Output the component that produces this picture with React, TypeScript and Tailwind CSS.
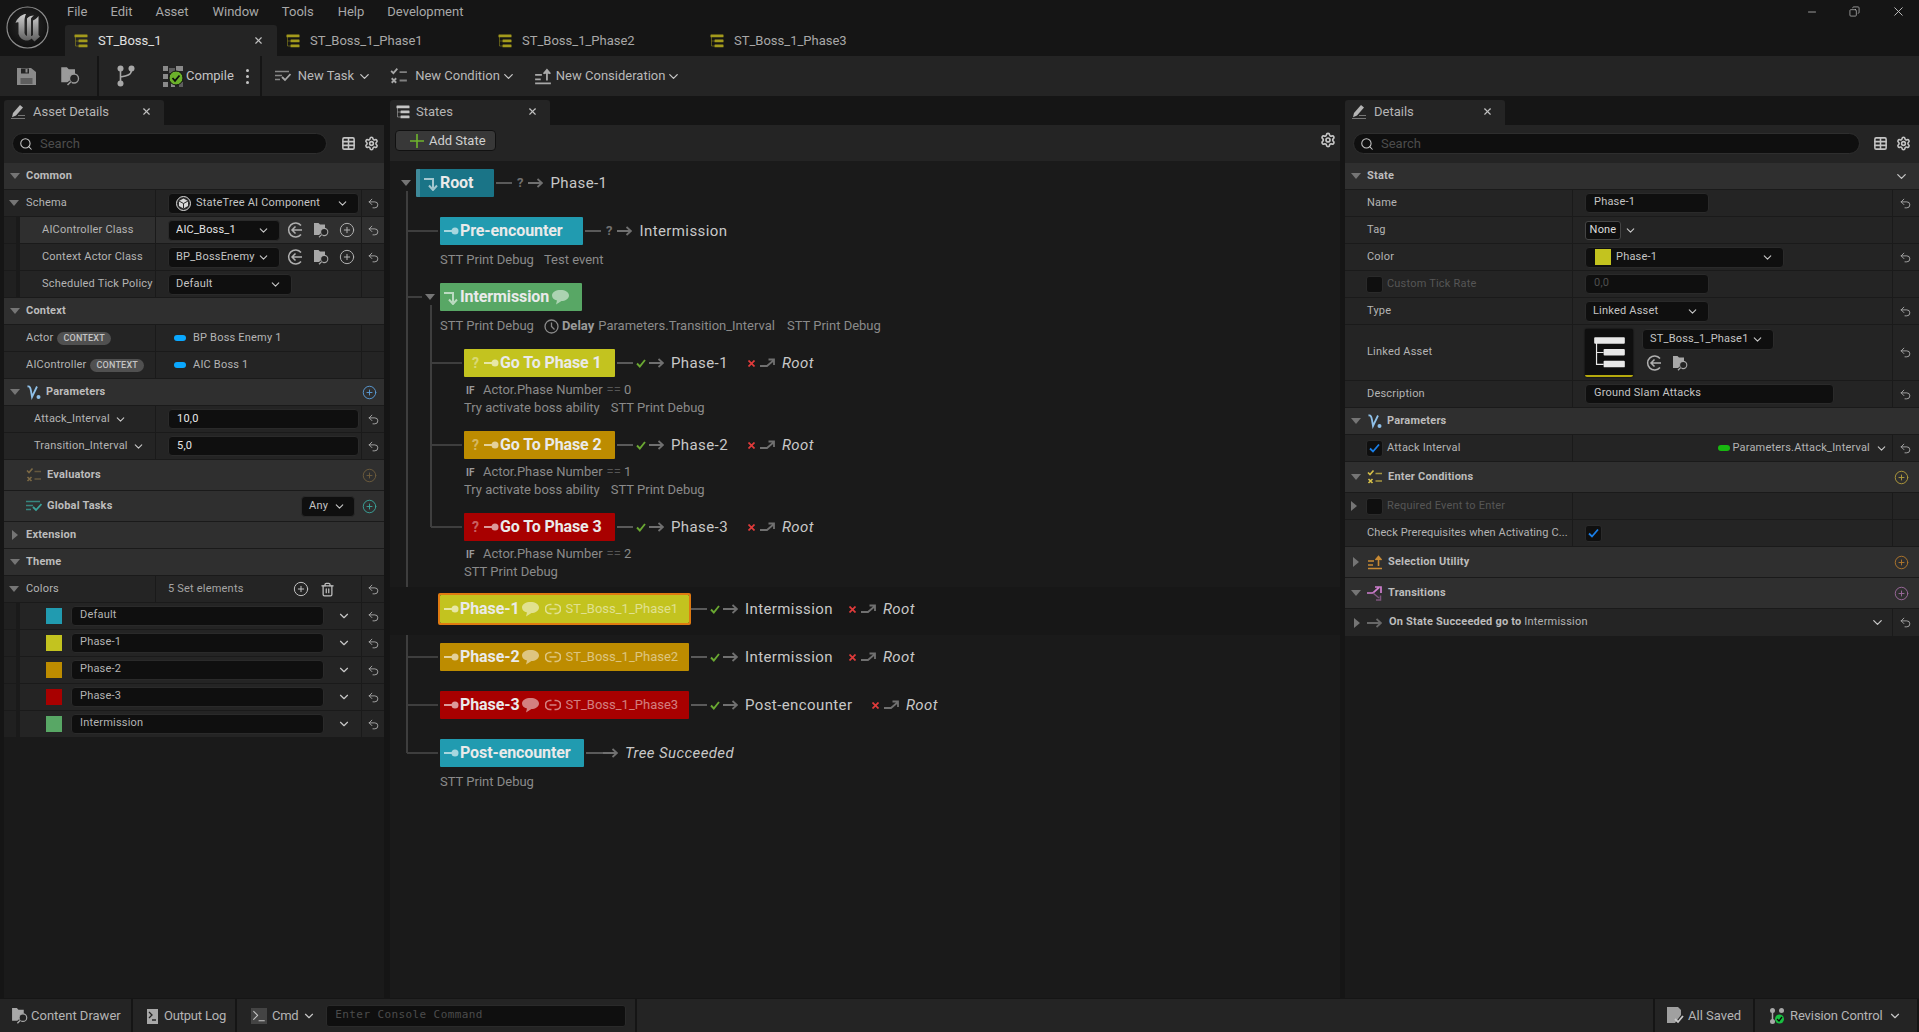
import type { ReactNode } from "react"
import { ChevronDown, CirclePlus, Search, Settings, Table, Trash2, Undo2, X, Minus, Copy, Terminal } from "lucide-react"

const Tri = ({ open = true }: { open?: boolean }) =>
  open ? (
    <svg width="10" height="6" viewBox="0 0 10 6" className="shrink-0">
      <path d="M0 0h10L5 6z" fill="#757575" />
    </svg>
  ) : (
    <svg width="6" height="10" viewBox="0 0 6 10" className="shrink-0">
      <path d="M0 0l6 5-6 5z" fill="#757575" />
    </svg>
  )

const Reset = () => <Undo2 size={13} strokeWidth={1.6} className="text-[#b0b0b0]" />
const Chev = ({ c = "text-[#c8c8c8]", s = 14 }: { c?: string; s?: number }) => (
  <ChevronDown size={s} strokeWidth={2} className={`${c} shrink-0`} />
)

const TreeIcon = ({ c = "#a39a1c", s = 14 }: { c?: string; s?: number }) => (
  <svg width={s} height={s} viewBox="0 0 14 14" className="shrink-0">
    <rect x="0.5" y="0.5" width="13" height="2.8" rx="0.4" fill={c} />
    <rect x="4.5" y="5.5" width="9" height="2.8" rx="0.4" fill={c} />
    <rect x="4.5" y="10.5" width="9" height="2.8" rx="0.4" fill={c} />
    <path d="M1.5 3v9h3M1.500 7h3" stroke={c} strokeWidth="0.5" fill="none" />
  </svg>
)

const PenIcon = () => (
  <svg width="17" height="17" viewBox="0 0 17 17" className="shrink-0">
    <path d="M3 10l7-8 3 2.600-7 8-4 1.600z" fill="#b5b5b5" />
    <path d="M1 15.500h14M8 12.500h7" stroke="#777" strokeWidth="1.200" />
  </svg>
)

const FolderSearch = ({ c = "#a8a8a8", s = 16 }: { c?: string; s?: number }) => (
  <svg width={s} height={s} viewBox="0 0 16 16" className="shrink-0">
    <path d="M1 1h4.500L7 2.500h5V13H1z" fill={c} />
    <circle cx="11.200" cy="10" r="3.600" fill="#242424" stroke={c} strokeWidth="1.100" />
    <path d="M8.600 12.600L6 15.200" stroke="#242424" strokeWidth="3" />
    <path d="M8.600 12.600L6 15.200" stroke={c} strokeWidth="1.300" />
  </svg>
)

const BrowseTo = () => (
  <svg width="16" height="16" viewBox="0 0 16 16" className="shrink-0">
    <path d="M14 3.500A7 7 0 1 0 14 12.500" fill="none" stroke="#b0b0b0" strokeWidth="1.500" />
    <path d="M15 8H5M8.500 4.500L5 8l3.500 3.500" fill="none" stroke="#b0b0b0" strokeWidth="1.500" />
  </svg>
)

const PanelTab = ({ icon, title }: { icon: ReactNode; title: string }) => (
  <div className="h-[29px] pt-[4px] bg-[#151515] shrink-0">
    <div className="w-[160px] h-[25px] pb-[2px] bg-[#242424] rounded-t-[3px] flex items-center pl-[6px] pr-[12px] text-[#b5b5b5] text-[13px]">
      {icon}
      <span className="ml-[6px] flex-1 whitespace-nowrap">{title}</span>
      <X size={11} strokeWidth={2.500} className="text-[#c0c0c0]" />
    </div>
  </div>
)

const SearchRow = ({ w, gap }: { w: string; gap: string }) => (
  <div className="h-[38px] pb-[1px] bg-[#242424] flex items-center pl-[8px] shrink-0">
    <div className={`${w} h-[21px] rounded-full bg-[#0f0f0f] border border-[#2e2e2e] flex items-center pl-[6px] text-[13px] text-[#4c4c4c]`}>
      <Search size={14} strokeWidth={1.800} className="text-[#c8c8c8] mr-[7px]" />
      Search
    </div>
    <span className={gap}><Table size={15} strokeWidth={2.500} className="text-[#c4c4c4]" /></span>
    <Settings size={15} strokeWidth={2.500} className="text-[#c4c4c4] ml-[8px]" />
  </div>
)

const Section = ({ children, tall, closed, add, right, pr = "pr-[7px]" }: { children: ReactNode; tall?: boolean; closed?: boolean; add?: string; right?: ReactNode; pr?: string }) => (
  <div className={`${tall ? "h-[31px]" : "h-[27px]"} bg-[#2f2f2f] border-b border-[#1a1a1a] flex items-center pl-[5px] ${pr} text-[11px] font-bold text-[#bcbcbc] tracking-[0.2px]`}>
    <span className="w-[12px] flex justify-center shrink-0">{closed === undefined ? null : <Tri open={!closed} />}</span>
    <span className="ml-[5px] flex items-center flex-1 gap-[5px]">{children}</span>
    {right}
    {add && <CirclePlus size={15} strokeWidth={1.500} style={{ color: add }} />}
  </div>
)

const Dropdown = ({ w, text, white, icon }: { w: string; text: string; white?: boolean; icon?: ReactNode }) => (
  <div className={`${w} h-[21px] bg-[#0f0f0f] border border-[#2a2a2a] rounded-[4px] flex items-center pl-[7px] pr-[9px] ${white ? "text-[#e4e4e4]" : "text-[#c4c4c4]"}`}>
    {icon}
    <span className="flex-1 whitespace-nowrap overflow-hidden">{text}</span>
    <Chev s={13} />
  </div>
)

const Input = ({ w, text, dim, bright }: { w: string; text: string; dim?: boolean; bright?: boolean }) => (
  <div className={`${w} h-[20px] bg-[#0f0f0f] border border-[#2a2a2a] rounded-[4px] flex items-center pl-[8px] ${dim ? "text-[#4e4e4e] pb-[1px]" : bright ? "text-[#e8e8e8]" : "text-[#c4c4c4] pb-[1px]"}`}>
    {text}
  </div>
)

const Check = ({ on }: { on?: boolean }) => (
  <span className="w-[17px] h-[17px] bg-[#0f0f0f] border border-[#2a2a2a] rounded-[3px] flex items-center justify-center shrink-0">
    {on && (
      <svg width="11" height="10" viewBox="0 0 11 10">
        <path d="M1 5.500l3 3L10 1.500" fill="none" stroke="#1a7fe8" strokeWidth="1.800" />
      </svg>
    )}
  </span>
)

// left panel row, columns 152 / 206 / 22
const LRow = ({ label, value, reset, nested, hover }: { label: ReactNode; value?: ReactNode; reset?: boolean; nested?: boolean; hover?: boolean }) => (
  <div className="h-[27px] grid grid-cols-[152px_206px_22px] border-b border-[#1a1a1a] bg-[#242424] text-[11px] tracking-[0.2px] text-[#b4b4b4]">
    <div className={`flex items-center border-r border-[#1a1a1a] overflow-hidden ${hover ? "bg-[#2f2f2f]" : ""}`}>
      {nested && <span className="w-[12px] h-full bg-[#202020] border-r-[4px] border-[#1a1a1a] box-content shrink-0" />}
      {label}
    </div>
    <div className={`flex items-center pl-[12px] border-r border-[#1a1a1a] ${hover ? "bg-[#2f2f2f]" : ""}`}>{value}</div>
    <div className={`flex items-center justify-center ${hover ? "bg-[#2f2f2f]" : ""}`}>{reset && <Reset />}</div>
  </div>
)

const ContextTag = () => (
  <span className="ml-[4px] h-[13px] px-[6px] rounded-full bg-[#505050] text-[#c4c4c4] text-[9px] leading-[13px] font-medium">CONTEXT</span>
)

const Pin = ({ c = "bg-[#0aa8ff]" }: { c?: string }) => <span className={`${c} w-[12px] h-[6px] rounded-full shrink-0`} />

const ClassTools = () => (
  <span className="flex items-center gap-[10px] ml-[7px]">
    <BrowseTo />
    <FolderSearch />
    <CirclePlus size={16} strokeWidth={1.500} className="text-[#b0b0b0]" />
  </span>
)

const ParamIcon = ({ c = "#8fc0e8" }: { c?: string }) => (
  <svg width="15" height="15" viewBox="0 0 15 15" className="shrink-0">
    <path d="M1.500 1.500C4 1 4.500 3 5 6l1 6 5-10.500" fill="none" stroke={c} strokeWidth="1.800" />
    <circle cx="12.500" cy="12" r="2" fill={c} />
  </svg>
)

const TaskIcon = ({ c }: { c: string }) => (
  <svg width="16" height="12" viewBox="0 0 16 12" className="shrink-0">
    <path d="M0 1.500h14M0 5.500h7M0 9.500h5" stroke={c} strokeWidth="1.400" opacity="0.75" />
    <path d="M7 7l3 3 5.500-6" stroke={c} strokeWidth="1.800" fill="none" />
  </svg>
)

const CondIcon = ({ c, s = 16 }: { c: string; s?: number }) => (
  <svg width={s} height={s} viewBox="0 0 16 16" className="shrink-0">
    <path d="M1 3.500l2 2 3.500-4" stroke={c} strokeWidth="1.600" fill="none" />
    <path d="M1.500 10l4 4M5.500 10l-4 4" stroke={c} strokeWidth="1.600" />
    <path d="M8.500 4.500H15M8.500 12H15" stroke={c} strokeWidth="1.600" opacity="0.7" />
  </svg>
)

const UtilIcon = ({ c, s = 16 }: { c: string; s?: number }) => (
  <svg width={s} height={s} viewBox="0 0 16 16" className="shrink-0">
    <path d="M1 7h6M1 11h5M1 14.500h14" stroke={c} strokeWidth="1.500" />
    <path d="M11.500 12V3M8.500 6l3-3.500 3 3.500" stroke={c} strokeWidth="1.600" fill={c} />
  </svg>
)

const SchemaIcon = () => (
  <svg width="15" height="15" viewBox="0 0 15 15" className="shrink-0 mr-[5px]">
    <circle cx="7.500" cy="7.500" r="7" fill="#2a2a2a" stroke="#d8d8d8" strokeWidth="1" />
    <path d="M7.500 2.500L12 5v5l-4.500 2.500L3 10V5z" fill="#d8d8d8" />
    <path d="M3 5l4.500 2.500L12 5M7.500 7.500v5" fill="none" stroke="#2a2a2a" strokeWidth="1" />
  </svg>
)

const AssetDetails = () => {
  const colors = [
    ["Default", "bg-[#219bb0]"],
    ["Phase-1", "bg-[#c3c31f]"],
    ["Phase-2", "bg-[#bd8c00]"],
    ["Phase-3", "bg-[#a80000]"],
    ["Intermission", "bg-[#58a765]"],
  ]
  return (
    <div className="w-[380px] shrink-0 flex flex-col bg-[#1a1a1a]">
      <PanelTab icon={<PenIcon />} title="Asset Details" />
      <SearchRow w="w-[315px]" gap="ml-[14px]" />
      <Section closed={false}>Common</Section>
      <LRow
        label={<span className="flex items-center pl-[5px] gap-[7px]"><span className="w-[10px]"><Tri /></span>Schema</span>}
        value={<Dropdown w="w-[191px]" text="StateTree AI Component" icon={<SchemaIcon />} />}
        reset
      />
      <LRow nested hover label={<span className="pl-[22px]">AIController Class</span>} value={<><Dropdown w="w-[112px]" text="AIC_Boss_1" white /><ClassTools /></>} reset />
      <LRow nested label={<span className="pl-[22px]">Context Actor Class</span>} value={<><Dropdown w="w-[112px]" text="BP_BossEnemy" /><ClassTools /></>} reset />
      <LRow nested label={<span className="pl-[22px] whitespace-nowrap">Scheduled Tick Policy</span>} value={<Dropdown w="w-[124px]" text="Default" />} />
      <Section closed={false}>Context</Section>
      <LRow label={<span className="pl-[22px] flex items-center">Actor<ContextTag /></span>} value={<span className="flex items-center gap-[7px] pl-[6px]"><Pin />BP Boss Enemy 1</span>} />
      <LRow label={<span className="pl-[22px] flex items-center">AIController<ContextTag /></span>} value={<span className="flex items-center gap-[7px] pl-[6px]"><Pin />AIC Boss 1</span>} />
      <Section closed={false} add="#5a9bd5"><ParamIcon />Parameters</Section>
      <LRow label={<span className="pl-[30px] flex items-center gap-[4px]">Attack_Interval<Chev s={13} /></span>} value={<Input w="w-[191px]" text="10,0" bright />} reset />
      <LRow label={<span className="pl-[30px] flex items-center gap-[4px]">Transition_Interval<Chev s={13} /></span>} value={<Input w="w-[191px]" text="5,0" bright />} reset />
      <Section tall closed={undefined} add="#6e5c3c"><CondIcon c="#7d6a45" /><span className="text-[#bcbcbc]">Evaluators</span></Section>
      <Section
        tall
        add="#3aa39a"
        right={
          <span className="w-[54px] h-[21px] mr-[7px] rounded-[4px] bg-[#0f0f0f] border border-[#2a2a2a] flex items-center pl-[7px] gap-[5px] font-normal text-[#c4c4c4]">
            Any
            <Chev s={13} />
          </span>
        }
      >
        <TaskIcon c="#3aa39a" />Global Tasks
      </Section>
      <Section closed>Extension</Section>
      <Section closed={false}>Theme</Section>
      <LRow
        label={<span className="flex items-center pl-[5px] gap-[7px]"><span className="w-[10px]"><Tri /></span>Colors</span>}
        value={
          <span className="flex items-center w-full">
            <span className="flex-1 text-[#a4a4a4]">5 Set elements</span>
            <CirclePlus size={16} strokeWidth={1.500} className="text-[#c0c0c0]" />
            <Trash2 size={15} strokeWidth={2} className="text-[#c0c0c0] ml-[11px] mr-[26px]" />
          </span>
        }
        reset
      />
      {colors.map(([name, bg]) => (
        <div key={name} className="h-[27px] flex bg-[#242424] border-b border-[#1a1a1a] text-[11px] tracking-[0.2px] text-[#b4b4b4]">
          <span className="w-[12px] bg-[#202020] border-r-[4px] border-[#1a1a1a] box-content shrink-0" />
          <div className="flex-1 flex items-center border-r border-[#1a1a1a]">
            <span className={`${bg} w-[16px] h-[16px] ml-[26px] shrink-0`} />
            <span className="ml-[9px] w-[253px] h-[20px] bg-[#0f0f0f] border border-[#2a2a2a] rounded-[4px] pl-[8px] pt-[1px] leading-[14px]">{name}</span>
            <span className="ml-[13px]"><Chev s={14} /></span>
          </div>
          <div className="w-[22px] flex items-center justify-center"><Reset /></div>
        </div>
      ))}
    </div>
  )
}

const Line = ({ w }: { w: string }) => <span className={`${w} h-[2px] bg-[#5a5a5a] shrink-0`} />

const ArrowRight = () => (
  <svg width="15" height="10" viewBox="0 0 15 10" className="shrink-0">
    <path d="M0 5h14M9.500 1l4.500 4-4.500 4" fill="none" stroke="#707070" strokeWidth="1.800" />
  </svg>
)

const ArrowUp = () => (
  <svg width="15" height="10" viewBox="0 0 15 10" className="shrink-0">
    <path d="M0 8h7l7-6M8.500 1.500H14V7" fill="none" stroke="#707070" strokeWidth="1.800" />
  </svg>
)

const OkMark = () => (
  <svg width="10" height="9" viewBox="0 0 10 9" className="shrink-0">
    <path d="M1 4.500l2.800 3L9 1" fill="none" stroke="#6aa832" strokeWidth="1.900" />
  </svg>
)

const NoMark = () => (
  <svg width="7" height="7" viewBox="0 0 7 7" className="shrink-0">
    <path d="M0.500 0.500l6 6M6.500 0.500l-6 6" stroke="#e03b3b" strokeWidth="1.700" />
  </svg>
)

const Stub = () => (
  <svg width="15" height="8" viewBox="0 0 15 8" className="opacity-60 shrink-0">
    <path d="M0 4h9" stroke="#fff" strokeWidth="2" />
    <circle cx="11" cy="4" r="3.500" fill="#fff" />
  </svg>
)

const Turn = () => (
  <svg width="15" height="15" viewBox="0 0 15 15" className="opacity-60 shrink-0">
    <path d="M0 3h9v9" fill="none" stroke="#fff" strokeWidth="2" />
    <path d="M5 9.500l4 4.500 4-4.500" fill="none" stroke="#fff" strokeWidth="2" />
  </svg>
)

const Bubble = () => (
  <svg width="17" height="15" viewBox="0 0 17 15" className="opacity-50 shrink-0">
    <path d="M8.500 0C13 0 17 2 17 5.500S13 11 9.500 11L4 14.500l1-4C2 10 0 8 0 5.500 0 2 4 0 8.500 0z" fill="#fff" />
  </svg>
)

const LinkIcon = () => (
  <svg width="16" height="12" viewBox="0 0 16 12" className="opacity-50 shrink-0">
    <path d="M6.500 1.500H5a4.500 4.500 0 0 0 0 9h1.500M9.500 1.500H11a4.500 4.500 0 0 1 0 9H9.500M4.500 6h7" fill="none" stroke="#fff" strokeWidth="1.700" />
  </svg>
)

const Target = ({ text, italic, w }: { text: string; italic?: boolean; w?: string }) => (
  <span className={`${w ?? ""} block text-[15px] tracking-[0.4px] text-[#c8c8c8] whitespace-nowrap ${italic ? "italic" : ""}`}>{text}</span>
)

const StateBox = ({ w, bg, label, icon, q, comment, linked, strip }: { w: string; bg: string; label: string; icon: ReactNode; q?: boolean; comment?: boolean; linked?: string; strip?: boolean }) => (
  <div className={`${w} ${bg} h-[28px] rounded-[1px] flex items-center shrink-0 ${strip ? "border-l-[4px] border-[#3f8a9a] pl-[4px]" : "pl-[4px]"}`}>
    {q && <span className="ml-[4px] mr-[5px] text-[14px] font-bold text-white/40">?</span>}
    {icon}
    <span className="ml-[1px] text-[16px] font-bold text-[#eaeaea] tracking-[-0.1px] whitespace-nowrap">{label}</span>
    {comment && <span className="ml-[3px]"><Bubble /></span>}
    {linked && (
      <span className="ml-[6px] flex items-center text-[13px] text-white/50">
        <LinkIcon />
        <span className="ml-[4px]">{linked}</span>
      </span>
    )}
  </div>
)

const Success = ({ to, w }: { to: string; w: string }) => (
  <span className="flex items-center ml-[2px]">
    <Line w="w-[16px]" />
    <span className="ml-[3px]"><OkMark /></span>
    <span className="ml-[3px]"><ArrowRight /></span>
    <span className="ml-[7px]"><Target text={to} w={w} /></span>
    <span className="ml-[19px]"><NoMark /></span>
    <span className="ml-[5px]"><ArrowUp /></span>
    <span className="ml-[7px]"><Target text="Root" italic /></span>
  </span>
)

const Maybe = ({ to }: { to: string }) => (
  <span className="flex items-center ml-[2px]">
    <Line w="w-[16px]" />
    <span className="ml-[5px] mr-[5px] text-[13px] font-bold text-[#707070]">?</span>
    <ArrowRight />
    <span className="ml-[7px]"><Target text={to} /></span>
  </span>
)

const Desc = ({ children, pl = "pl-[50px]" }: { children: ReactNode; pl?: string }) => (
  <div className={`${pl} h-[18px] flex items-center text-[13px] text-[#8a8a8a] whitespace-nowrap`}>{children}</div>
)

const IfLine = ({ n }: { n: number }) => (
  <Desc pl="pl-[76px]">
    <span className="text-[10px] font-bold text-[#9a9a9a] w-[17px]">IF</span>
    Actor.Phase Number <span className="text-[#555] ml-[4px]">==</span>&nbsp;{n}
  </Desc>
)

const StatesPanel = () => {
  const g = "M17 30V592M17 70H48M17 136H32M17 448H48M17 496H48M17 544H48M17 592H48M41 144V366M41 202H72M41 284H72M41 366H72"
  return (
    <div className="w-[950px] shrink-0 ml-[6px] flex flex-col">
      <PanelTab icon={<TreeIcon c="#c4c4c4" s={14} />} title="States" />
      <div className="h-[36px] bg-[#242424] flex items-start justify-between pt-[5px] pl-[5px] pr-[4px] shrink-0">
        <div className="w-[101px] h-[21px] rounded-[4px] bg-[#383838] border border-[#111] flex items-center pl-[14px] text-[13px] text-[#d0d0d0]">
          <svg width="14" height="14" viewBox="0 0 14 14" className="mr-[5px]">
            <path d="M7 0v14M0 7h14" stroke="#6fb52d" strokeWidth="1.600" />
          </svg>
          Add State
        </div>
        <span className="pt-[2px]"><Settings size={16} strokeWidth={2.500} className="text-[#c4c4c4]" /></span>
      </div>
      <div className="relative flex-1 bg-[#1a1a1a] pt-[8px]">
        <svg width="100" height="600" className="absolute left-0 top-0">
          <path d={g} fill="none" stroke="#3e3e3e" strokeWidth="2" />
        </svg>
        <div className="relative">
          <div className="flex items-center pl-[11px] pb-[10px]">
            <span className="mr-[5px]"><Tri /></span>
            <StateBox w="w-[78px]" bg="bg-[#1a7487]" label="Root" icon={<Turn />} strip />
            <Maybe to="Phase-1" />
          </div>
          <div className="pt-[10px] pb-[4px]">
            <div className="flex items-center pl-[50px]">
              <StateBox w="w-[143px]" bg="bg-[#219bb0]" label="Pre-encounter" icon={<Stub />} />
              <Maybe to="Intermission" />
            </div>
            <div className="pt-[6px]">
              <Desc>STT Print Debug<span className="ml-[10px]">Test event</span></Desc>
            </div>
          </div>
          <div className="pt-[10px] pb-[4px]">
            <div className="flex items-center pl-[35px]">
              <span className="mr-[5px]"><Tri /></span>
              <StateBox w="w-[142px]" bg="bg-[#58a765]" label="Intermission" icon={<Turn />} comment />
            </div>
            <div className="pt-[6px]">
              <Desc>
                STT Print Debug
                <svg width="15" height="15" viewBox="0 0 15 15" className="ml-[10px] mr-[3px]">
                  <circle cx="7.500" cy="7.500" r="6.500" fill="none" stroke="#8a8a8a" strokeWidth="1.300" />
                  <path d="M7.500 3.500v4l3 3" fill="none" stroke="#8a8a8a" strokeWidth="1.300" />
                </svg>
                <b className="text-[#9a9a9a]">Delay</b>
                <span className="ml-[4px]">Parameters.Transition_Interval</span>
                <span className="ml-[12px]">STT Print Debug</span>
              </Desc>
            </div>
          </div>
          {[
            { n: 1, bg: "bg-[#c3c31f]", to: "Phase-1", desc: <>Try activate boss ability<span className="ml-[11px]">STT Print Debug</span></> },
            { n: 2, bg: "bg-[#bd8c00]", to: "Phase-2", desc: <>Try activate boss ability<span className="ml-[11px]">STT Print Debug</span></> },
            { n: 3, bg: "bg-[#a80000]", to: "Phase-3", desc: <>STT Print Debug</> },
          ].map((s) => (
            <div key={s.n} className={`pt-[10px] ${s.n === 3 ? "pb-[6px]" : "pb-[4px]"}`}>
              <div className="flex items-center pl-[74px]">
                <StateBox w="w-[151px]" bg={s.bg} label={`Go To Phase ${s.n}`} icon={<Stub />} q />
                <Success to={s.to} w="w-[58px]" />
              </div>
              <div className="pt-[4px]">
                <IfLine n={s.n - 1} />
                <Desc pl="pl-[74px]">{s.desc}</Desc>
              </div>
            </div>
          ))}
          <div className="h-[48px] pt-[6px] bg-[#171717] pl-[48px] flex items-start">
            <div className="flex items-center">
              <div className="border-2 border-[#e07a10] rounded-[2px]">
                <StateBox w="w-[249px]" bg="bg-[#c3c31f]" label="Phase-1" icon={<Stub />} comment linked="ST_Boss_1_Phase1" />
              </div>
              <span className="-ml-[2px]"><Success to="Intermission" w="w-[85px]" /></span>
            </div>
          </div>
          <div className="h-[48px] pt-[8px] pl-[50px] flex items-start">
            <StateBox w="w-[249px]" bg="bg-[#bd8c00]" label="Phase-2" icon={<Stub />} comment linked="ST_Boss_1_Phase2" />
            <div className="h-[28px] flex items-center"><Success to="Intermission" w="w-[85px]" /></div>
          </div>
          <div className="h-[48px] pt-[8px] pl-[50px] flex items-start">
            <StateBox w="w-[249px]" bg="bg-[#a80000]" label="Phase-3" icon={<Stub />} comment linked="ST_Boss_1_Phase3" />
            <div className="h-[28px] flex items-center"><Success to="Post-encounter" w="w-[108px]" /></div>
          </div>
          <div className="pt-[8px]">
            <div className="flex items-center pl-[50px]">
              <StateBox w="w-[144px]" bg="bg-[#219bb0]" label="Post-encounter" icon={<Stub />} />
              <span className="flex items-center ml-[2px]">
                <Line w="w-[17px]" />
                <ArrowRight />
                <span className="ml-[7px]"><Target text="Tree Succeeded" italic /></span>
              </span>
            </div>
            <div className="pt-[6px]">
              <Desc>STT Print Debug</Desc>
            </div>
          </div>
        </div>
      </div>
    </div>
  )
}

// details panel row, columns 228 / 320 / 26
const RRow = ({ label, value, reset, h = "h-[27px]" }: { label: ReactNode; value?: ReactNode; reset?: boolean; h?: string }) => (
  <div className={`${h} grid grid-cols-[228px_320px_26px] bg-[#242424] border-b border-[#1a1a1a] text-[11px] tracking-[0.2px] text-[#b4b4b4]`}>
    <div className="flex items-center pl-[22px] border-r border-[#1a1a1a] whitespace-nowrap">{label}</div>
    <div className="flex items-center pl-[12px] border-r border-[#1a1a1a]">{value}</div>
    <div className="flex items-center justify-center pr-[2px]">{reset && <Reset />}</div>
  </div>
)

const DetailsPanel = () => (
  <div className="flex-1 ml-[5px] flex flex-col bg-[#1a1a1a]">
    <PanelTab icon={<PenIcon />} title="Details" />
    <SearchRow w="w-[507px]" gap="ml-[13px]" />
    <Section closed={false} pr="pr-[10px]" right={<Chev s={15} />}>State</Section>
    <RRow label="Name" value={<Input w="w-[124px]" text="Phase-1" />} reset />
    <RRow
      label="Tag"
      value={
        <span className="flex items-center gap-[3px]">
          <span className="w-[36px] h-[19px] border border-[#444] rounded-[3px] bg-[#0f0f0f] flex items-center justify-center text-[#dcdcdc]">None</span>
          <Chev s={13} />
        </span>
      }
    />
    <RRow label="Color" value={<Dropdown w="w-[199px]" text="Phase-1" icon={<span className="w-[16px] h-[16px] bg-[#c3c31f] ml-[2px] mr-[5px]" />} />} reset />
    <RRow
      label={<span className="flex items-center gap-[4px] -ml-[1px] text-[#565656]"><Check />Custom Tick Rate</span>}
      value={<Input w="w-[124px]" text="0,0" dim />}
    />
    <RRow label="Type" value={<Dropdown w="w-[124px]" text="Linked Asset" />} reset />
    <RRow
      h="h-[56px]"
      label="Linked Asset"
      value={
        <span className="flex items-start gap-[9px] mt-[1px]">
          <span className="w-[48px] h-[48px] bg-[#0f0f0f] border-b-2 border-[#b5a90d] rounded-[2px] flex items-center justify-center shadow-[0_0_2px_#000]">
            <TreeIcon c="#e8e8e8" s={33} />
          </span>
          <span className="flex flex-col gap-[5px]">
            <Dropdown w="w-[132px]" text="ST_Boss_1_Phase1" />
            <span className="flex items-center gap-[10px] pl-[4px]">
              <BrowseTo />
              <FolderSearch />
            </span>
          </span>
        </span>
      }
      reset
    />
    <RRow label="Description" value={<Input w="w-[249px]" text="Ground Slam Attacks" />} reset />
    <Section closed={false}><ParamIcon />Parameters</Section>
    <RRow
      label={<span className="flex items-center gap-[4px] -ml-[1px]"><Check on />Attack Interval</span>}
      value={
        <span className="flex items-center justify-end w-full pr-[4px]">
          <Pin c="bg-[#18b810]" />
          <span className="ml-[2px] mr-[5px]">Parameters.Attack_Interval</span>
          <Chev s={13} />
        </span>
      }
      reset
    />
    <Section tall closed={false} pr="pr-[10px]" add="#b09a3c"><CondIcon c="#d9c24a" />Enter Conditions</Section>
    <RRow label={<span className="flex items-center gap-[4px] -ml-[1px] text-[#565656]"><span className="-ml-[15px] mr-[5px]"><Tri open={false} /></span><Check />Required Event to Enter</span>} />
    <RRow label={<span className="tracking-[0.1px]">Check Prerequisites when Activating C...</span>} value={<Check on />} />
    <Section tall closed pr="pr-[10px]" add="#b0762c"><UtilIcon c="#c88a34" />Selection Utility</Section>
    <Section tall closed={false} pr="pr-[10px]" add="#9c6a9c">
      <svg width="16" height="16" viewBox="0 0 16 16" className="shrink-0">
        <path d="M0 8h6l6-5.500M8 2h6v6" fill="none" stroke="#cf7fcf" strokeWidth="1.700" />
        <path d="M6 8l6 5M9 15h4.500v-4.500" fill="none" stroke="#7d557d" strokeWidth="1.500" />
      </svg>
      Transitions
    </Section>
    <div className="h-[27px] grid grid-cols-[548px_26px] bg-[#242424] text-[11px] tracking-[0.2px] text-[#b4b4b4]">
      <div className="flex items-center pl-[9px] border-r border-[#1a1a1a] pr-[7px]">
        <Tri open={false} />
        <span className="ml-[7px] opacity-90"><ArrowRight /></span>
        <span className="ml-[7px] flex-1"><b className="text-[#bcbcbc]">On State Succeeded go to</b> Intermission</span>
        <Chev s={15} />
      </div>
      <div className="flex items-center justify-center pr-[2px]"><Reset /></div>
    </div>
  </div>
)

const Logo = () => (
  <svg width="43" height="43" viewBox="0 0 43 43" className="shrink-0">
    <defs>
      <radialGradient id="lg" cx="50%" cy="45%" r="55%">
        <stop offset="0%" stopColor="#2c2c2c" />
        <stop offset="100%" stopColor="#101010" />
      </radialGradient>
      <linearGradient id="lu" x1="0" y1="0" x2="0" y2="1">
        <stop offset="0%" stopColor="#d0d0d0" />
        <stop offset="100%" stopColor="#5c5c5c" />
      </linearGradient>
    </defs>
    <circle cx="21.500" cy="21.500" r="20.500" fill="url(#lg)" stroke="#8c8c8c" strokeWidth="1.200" />
    <path
      d="M19 8C15 9 11 12.500 9.500 17c1-.8 2-1 3-.6V28c1 3.500 4 6 7 6.500 2.500.4 4.500-.4 6-2l3 3 5.500-5-1.500-1.500V10c-1.500 2-3.500 3.500-5.500 4.500V29c-.7.8-1.300 1-2 1V12.500c.6-1 1.500-2 3-3-3 0-5.500 1-7 3V30c-1.300-.5-2-1.500-2.500-3V14c.3-2.500 .7-4.500 1.500-6z"
      fill="url(#lu)"
    />
  </svg>
)

const DocTab = ({ name, active }: { name: string; active?: boolean }) => (
  <div className={`w-[212px] h-[31px] flex items-center pl-[9px] pr-[13px] rounded-t-[3px] text-[13px] ${active ? "bg-[#242424] text-[#e0e0e0]" : "text-[#a8a8a8]"}`}>
    <TreeIcon />
    <span className="ml-[10px] flex-1">{name}</span>
    {active && <X size={11} strokeWidth={2.500} className="text-[#c0c0c0] -ml-[4px]" />}
  </div>
)

const ToolSep = () => <span className="w-[2px] h-[40px] bg-[#151515] shrink-0 block" />

const CompileIcon = () => (
  <svg width="21" height="21" viewBox="0 0 21 21" className="shrink-0">
    <path d="M0 0h5v5H0zM13 0h7v5h-7zM0 8h5v5H0zM0 16h5v5H0zM8 16h4v5H8z" fill="#8a8a8a" />
    <path d="M6 2h6v5H6zM16 16h4v5h-4z" fill="#5e5e5e" />
    <circle cx="13" cy="12" r="7" fill="#6bb02a" stroke="#111" strokeWidth="1" />
    <path d="M9.500 12l2.500 2.800 4.500-5.300" fill="none" stroke="#0c0c0c" strokeWidth="1.800" />
  </svg>
)

const Toolbar = () => (
  <div className="h-[40px] bg-[#242424] flex items-center text-[13px] text-[#b8b8b8] shrink-0">
    <svg width="19" height="19" viewBox="0 0 19 19" className="ml-[17px] shrink-0">
      <path d="M0 1h14l5 4v13H0z" fill="#8a8a8a" />
      <rect x="4" y="1.500" width="8" height="5" fill="#242424" />
      <rect x="8.500" y="2" width="2" height="3.500" fill="#8a8a8a" />
      <rect x="3.500" y="11" width="12" height="6" fill="#5e5e5e" />
    </svg>
    <span className="ml-[24px]"><FolderSearch c="#9a9a9a" s={20} /></span>
    <span className="ml-[17px]"><ToolSep /></span>
    <svg width="18" height="22" viewBox="0 0 18 22" className="ml-[18px] shrink-0">
      <circle cx="3.500" cy="3.500" r="3" fill="#a8a8a8" />
      <circle cx="3.500" cy="18.500" r="3" fill="#a8a8a8" />
      <circle cx="14.500" cy="3.500" r="3" fill="#a8a8a8" />
      <path d="M3.500 4v14M14.500 5c0 5-5 6-11 7" fill="none" stroke="#a8a8a8" strokeWidth="1.600" />
    </svg>
    <span className="ml-[28px]"><CompileIcon /></span>
    <span className="ml-[2px] text-[#c4c4c4]">Compile</span>
    <span className="ml-[12px] flex flex-col gap-[3px]">
      <span className="w-[3px] h-[3px] bg-[#c4c4c4] rounded-full" />
      <span className="w-[3px] h-[3px] bg-[#c4c4c4] rounded-full" />
      <span className="w-[3px] h-[3px] bg-[#c4c4c4] rounded-full" />
    </span>
    <span className="ml-[11px]"><ToolSep /></span>
    <span className="ml-[13px]"><TaskIcon c="#a8a8a8" /></span>
    <span className="ml-[7px]">New Task</span>
    <span className="ml-[3px]"><Chev s={15} /></span>
    <span className="ml-[18px]"><CondIcon c="#a8a8a8" s={18} /></span>
    <span className="ml-[7px]">New Condition</span>
    <span className="ml-[1px]"><Chev s={15} /></span>
    <span className="ml-[18px]"><UtilIcon c="#a8a8a8" s={18} /></span>
    <span className="ml-[4px]">New Consideration</span>
    <span className="ml-[1px]"><Chev s={15} /></span>
  </div>
)

const StatusBar = () => (
  <div className="h-[33px] bg-[#151515] flex gap-[2px] pr-[2px] text-[13px] text-[#b4b4b4] shrink-0">
    <div className="w-[131px] bg-[#242424] flex items-center pl-[11px] gap-[3px]"><FolderSearch c="#a8a8a8" s={17} />Content Drawer</div>
    <div className="w-[102px] bg-[#242424] flex items-center pl-[13px] gap-[5px] tracking-[-0.2px]">
      <svg width="13" height="18" viewBox="0 0 13 18" className="shrink-0">
        <path d="M1 2h11v15H1z" fill="#a8a8a8" />
        <path d="M3 5l3 3-3 3M6 13h4" fill="none" stroke="#242424" strokeWidth="1.300" />
      </svg>
      Output Log
    </div>
    <div className="w-[398px] bg-[#242424] flex items-center pl-[14px]">
      <Terminal size={16} strokeWidth={1.600} className="text-[#c4c4c4] bg-[#444] mr-[5px]" />
      <span className="tracking-[-0.3px]">Cmd</span>
      <span className="ml-[4px]"><Chev s={14} /></span>
      <div className="ml-[10px] w-[300px] h-[22px] bg-[#0f0f0f] border border-[#2a2a2a] rounded-[3px] flex items-center pl-[8px] font-['DejaVu_Sans_Mono',monospace] text-[11px] tracking-[0.4px] text-[#4c4c4c]">Enter Console Command</div>
    </div>
    <div className="flex-1 bg-[#242424]" />
    <div className="w-[98px] bg-[#242424] flex items-center pl-[12px] gap-[4px]">
      <svg width="17" height="17" viewBox="0 0 17 17" className="shrink-0">
        <path d="M0 0h11l3 3v5l-6 8H0z" fill="#a0a0a0" />
        <path d="M8 12l3 3 5-6" fill="none" stroke="#c8c8c8" strokeWidth="1.800" />
      </svg>
      All Saved
    </div>
    <div className="w-[162px] bg-[#242424] flex items-center pl-[15px] gap-[5px]">
      <svg width="15" height="16" viewBox="0 0 15 16" className="shrink-0">
        <circle cx="2.500" cy="2.500" r="2.500" fill="#a8a8a8" />
        <circle cx="11.500" cy="2.500" r="2.500" fill="#a8a8a8" />
        <circle cx="2.500" cy="13.500" r="2.500" fill="#a8a8a8" />
        <path d="M2.500 3v10" stroke="#a8a8a8" strokeWidth="1.500" />
        <circle cx="9.500" cy="11" r="4.500" fill="#18c040" />
        <path d="M7 11l2 2 3-4" fill="none" stroke="#0c0c0c" strokeWidth="1.300" />
      </svg>
      <span className="tracking-[-0.1px]">Revision Control</span>
      <Chev s={14} />
    </div>
  </div>
)

export default function App() {
  return (
    <div className="w-full h-[1032px] overflow-hidden flex flex-col bg-[#151515] font-['Roboto',sans-serif]">
      <div className="h-[56px] flex shrink-0">
        <div className="w-[65px] pl-[6px] pt-[6px] shrink-0"><Logo /></div>
        <div className="flex-1 flex flex-col">
          <div className="h-[25px] pb-[2px] flex items-center text-[13px] text-[#a8a8a8]">
            <span className="ml-[2px]">File</span>
            <span className="ml-[23px]">Edit</span>
            <span className="ml-[23px]">Asset</span>
            <span className="ml-[24px]">Window</span>
            <span className="ml-[23px]">Tools</span>
            <span className="ml-[24px]">Help</span>
            <span className="ml-[23px]">Development</span>
            <span className="ml-auto flex items-center gap-[31px] pr-[13px] text-[#c4c4c4]">
              <Minus size={12} strokeWidth={1.500} />
              <Copy size={11} strokeWidth={1.500} className="-scale-x-100" />
              <X size={15} strokeWidth={1.500} />
            </span>
          </div>
          <div className="flex">
            <DocTab name="ST_Boss_1" active />
            <DocTab name="ST_Boss_1_Phase1" />
            <DocTab name="ST_Boss_1_Phase2" />
            <DocTab name="ST_Boss_1_Phase3" />
          </div>
        </div>
      </div>
      <Toolbar />
      <div className="flex-1 flex pl-[4px] min-h-0">
        <AssetDetails />
        <StatesPanel />
        <DetailsPanel />
      </div>
      <div className="h-[1px] shrink-0" />
      <StatusBar />
    </div>
  )
}
